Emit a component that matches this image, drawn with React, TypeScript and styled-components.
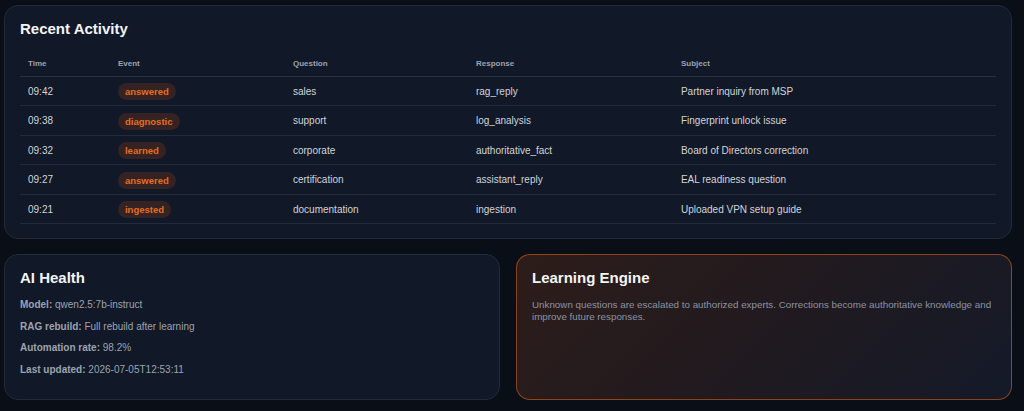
import React from 'react';
import styled, { createGlobalStyle } from 'styled-components';

const GlobalStyle = createGlobalStyle`
  *, *::before, *::after {
    box-sizing: border-box;
  }
  html, body {
    margin: 0;
    padding: 0;
    background: #0a0e17;
    font-family: "Liberation Sans", Arial, sans-serif;
  }
`;

const Page = styled.div`
  padding: 5px 12px 12px 4px;
  display: flex;
  flex-direction: column;
  gap: 15px;
`;

const Card = styled.section<{ $accent?: boolean }>`
  min-width: 0;
  border-radius: 14px;
  border: 1px solid ${p => (p.$accent ? 'rgba(234, 100, 20, 0.55)' : '#222b3b')};
  background: ${p =>
    p.$accent
      ? 'linear-gradient(135deg, #2d1d1a 0%, #221a1e 45%, #141a29 100%)'
      : '#111827'};
  padding: 14px 15px 14px;
`;

const Title = styled.h2`
  margin: 0 0 14px;
  color: #f3f4f6;
  font-size: 15px;
  line-height: 17px;
  font-weight: 700;
`;

const CardTitle = styled(Title)`
  margin-bottom: 13px;
`;

const Table = styled.table`
  width: 100%;
  border-collapse: collapse;
  table-layout: fixed;
`;

const Th = styled.th<{ $w: number }>`
  width: ${p => p.$w}%;
  text-align: left;
  font-size: 8px;
  line-height: 9px;
  font-weight: 700;
  color: #9ca3af;
  padding: 8px 8px 8px;
  border-bottom: 1px solid #283142;
`;

const Td = styled.td`
  font-size: 10px;
  line-height: 17px;
  color: #d1d5db;
  padding: 5.6px 8px 5px;
  border-bottom: 1px solid #222b3b;
  white-space: nowrap;
`;

const Badge = styled.span`
  display: inline-block;
  padding: 3px 7px;
  border-radius: 999px;
  background: rgba(234, 88, 12, 0.17);
  color: #e56e1f;
  font-size: 9.5px;
  line-height: 11px;
  font-weight: 700;
  vertical-align: middle;
`;

const Row = styled.div`
  display: grid;
  grid-template-columns: 1fr 1fr;
  gap: 16px;
`;

const Line = styled.p`
  margin: 0 0 10px;
  font-size: 10px;
  line-height: 11.5px;
  color: #9ca3af;

  b {
    font-weight: 700;
  }
`;

const Text = styled.p`
  margin: 0;
  font-size: 9.8px;
  line-height: 12px;
  color: #8b93a2;
`;

const columns = [
  { label: 'Time', w: 9.22 },
  { label: 'Event', w: 17.93 },
  { label: 'Question', w: 18.75 },
  { label: 'Response', w: 21.0 },
  { label: 'Subject', w: 33.1 },
];

const rows = [
  ['09:42', 'answered', 'sales', 'rag_reply', 'Partner inquiry from MSP'],
  ['09:38', 'diagnostic', 'support', 'log_analysis', 'Fingerprint unlock issue'],
  ['09:32', 'learned', 'corporate', 'authoritative_fact', 'Board of Directors correction'],
  ['09:27', 'answered', 'certification', 'assistant_reply', 'EAL readiness question'],
  ['09:21', 'ingested', 'documentation', 'ingestion', 'Uploaded VPN setup guide'],
];

const health = [
  ['Model:', 'qwen2.5:7b-instruct'],
  ['RAG rebuild:', 'Full rebuild after learning'],
  ['Automation rate:', '98.2%'],
  ['Last updated:', '2026-07-05T12:53:11'],
];

export default function App() {
  return (
    <>
      <GlobalStyle />
      <Page>
        <Card>
          <Title>Recent Activity</Title>
          <Table>
            <thead>
              <tr>
                {columns.map(c => (
                  <Th key={c.label} $w={c.w}>{c.label}</Th>
                ))}
              </tr>
            </thead>
            <tbody>
              {rows.map((r, i) => (
                <tr key={i}>
                  <Td>{r[0]}</Td>
                  <Td><Badge>{r[1]}</Badge></Td>
                  <Td>{r[2]}</Td>
                  <Td>{r[3]}</Td>
                  <Td>{r[4]}</Td>
                </tr>
              ))}
            </tbody>
          </Table>
        </Card>
        <Row>
          <Card>
            <CardTitle>AI Health</CardTitle>
            {health.map(([k, v]) => (
              <Line key={k}><b>{k}</b> {v}</Line>
            ))}
          </Card>
          <Card $accent>
            <CardTitle>Learning Engine</CardTitle>
            <Text>
              Unknown questions are escalated to authorized experts. Corrections become
              authoritative knowledge and improve future responses.
            </Text>
          </Card>
        </Row>
      </Page>
    </>
  );
}
